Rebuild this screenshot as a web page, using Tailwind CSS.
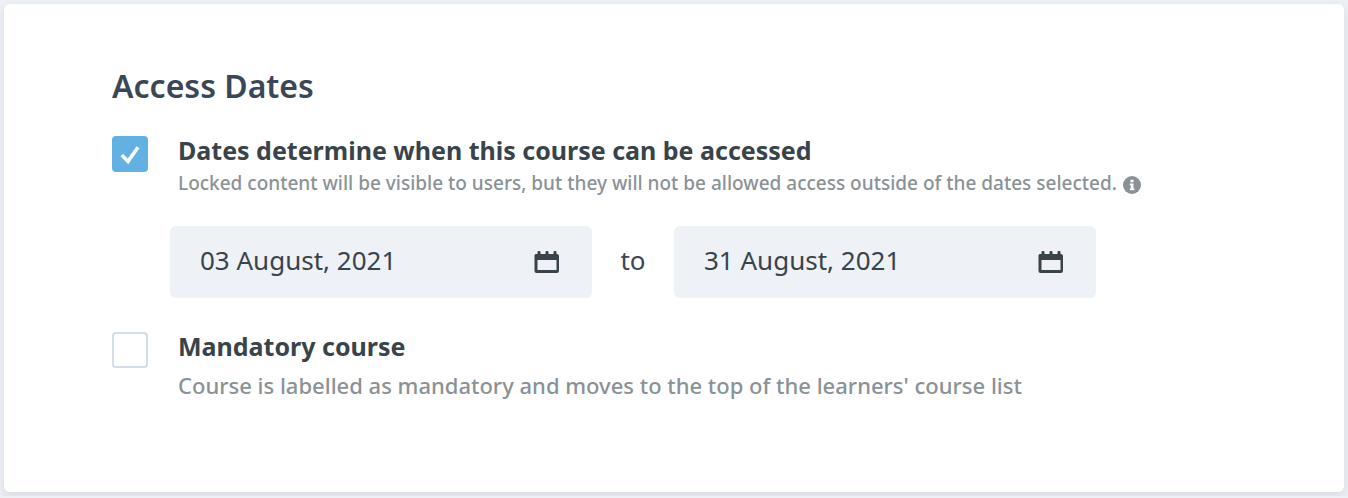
<!DOCTYPE html>
<html lang="en">

<head>
    <meta charset="UTF-8" />
    <meta name="viewport" content="width=device-width, initial-scale=1.0" />
    <title>Course access dates</title>
    <script src="https://cdn.jsdelivr.net/npm/@tailwindcss/browser@4"></script>
</head>

<body class="bg-[#edf0f5] p-1 font-['Noto_Sans',sans-serif] text-[#38444a]">
    <form class="bg-white rounded-md shadow-[0_4px_10px_rgba(56,72,88,0.12)] px-[108px] pt-16 pb-[86px]">
        <h2 class="text-[32px] leading-9 font-semibold text-[#3a4757]">Access Dates</h2>

        <!-- Access dates -->
        <div class="flex gap-[30px] mt-7">
            <div class="relative size-9 mt-1 shrink-0">
                <input type="checkbox" id="useDates" checked
                    class="peer appearance-none block size-9 rounded-sm border-2 border-[#d5dee6] checked:bg-[#62b1e3] checked:border-[#62b1e3]" />
                <svg class="absolute inset-0 pointer-events-none hidden peer-checked:block" viewBox="0 0 36 36"
                    fill="none" stroke="white" stroke-width="3.6">
                    <path d="M9.8 19l6.2 6.4L26 11.2" />
                </svg>
            </div>
            <div>
                <label for="useDates" class="block text-[25px] leading-9 font-bold">Dates determine when this course can
                    be accessed</label>
                <p class="flex items-center gap-1.5 text-[19px] leading-[30px] font-medium text-[#8a9296]">
                    Locked content will be visible to users, but they will not be allowed access outside of the dates
                    selected.
                    <svg class="size-[18px] shrink-0 mt-1" viewBox="0 0 18 18" fill="#8a9296">
                        <circle cx="9" cy="9" r="9" />
                        <path fill="white" d="M7.5 3.8h3v2.5h-3zM6.8 7.6h3.7v4.9h1v1.7H6.8v-1.7h.9V9.3h-.9z" />
                    </svg>
                </p>
            </div>
        </div>

        <div class="flex items-center ml-[58px] mt-7 text-[26px]">
            <div class="flex items-center w-[422px] h-[72px] pl-[30px] pr-8 rounded-md bg-[#eef1f6]">
                <input type="text" aria-label="Start date" value="03 August, 2021" class="flex-1 min-w-0 pb-1" />
                <svg class="w-[26px] h-6 shrink-0" viewBox="0 0 26 24" fill="#38444a">
                    <path fill-rule="evenodd"
                        d="M3.5 4V2a1 1 0 0 1 1-1h1a1 1 0 0 1 1 1v2h5V2a1 1 0 0 1 1-1h1a1 1 0 0 1 1 1v2h5V2a1 1 0 0 1 1-1h1a1 1 0 0 1 1 1v2h.5a2 2 0 0 1 2 2v15a2 2 0 0 1-2 2H2.5a2 2 0 0 1-2-2V6a2 2 0 0 1 1-2zM3.5 10v10h19V10z" />
                </svg>
            </div>
            <span class="w-[82px] pb-1 text-center text-[#3a4757]">to</span>
            <div class="flex items-center w-[422px] h-[72px] pl-[30px] pr-8 rounded-md bg-[#eef1f6]">
                <input type="text" aria-label="End date" value="31 August, 2021" class="flex-1 min-w-0 pb-1" />
                <svg class="w-[26px] h-6 shrink-0" viewBox="0 0 26 24" fill="#38444a">
                    <path fill-rule="evenodd"
                        d="M3.5 4V2a1 1 0 0 1 1-1h1a1 1 0 0 1 1 1v2h5V2a1 1 0 0 1 1-1h1a1 1 0 0 1 1 1v2h5V2a1 1 0 0 1 1-1h1a1 1 0 0 1 1 1v2h.5a2 2 0 0 1 2 2v15a2 2 0 0 1-2 2H2.5a2 2 0 0 1-2-2V6a2 2 0 0 1 1-2zM3.5 10v10h19V10z" />
                </svg>
            </div>
        </div>

        <!-- Mandatory course -->
        <div class="flex gap-[30px] mt-[30px]">
            <div class="relative size-9 mt-1 shrink-0">
                <input type="checkbox" id="mandatory"
                    class="peer appearance-none block size-9 rounded-sm border-2 border-[#d5dee6] checked:bg-[#62b1e3] checked:border-[#62b1e3]" />
                <svg class="absolute inset-0 pointer-events-none hidden peer-checked:block" viewBox="0 0 36 36"
                    fill="none" stroke="white" stroke-width="3.6">
                    <path d="M9.8 19l6.2 6.4L26 11.2" />
                </svg>
            </div>
            <div>
                <label for="mandatory" class="block text-[25px] leading-9 font-bold">Mandatory course</label>
                <p class="text-[22px] leading-[42px] font-medium text-[#8a9296]">Course is labelled as mandatory and
                    moves to the top of the learners' course list</p>
            </div>
        </div>
    </form>
</body>

</html>
